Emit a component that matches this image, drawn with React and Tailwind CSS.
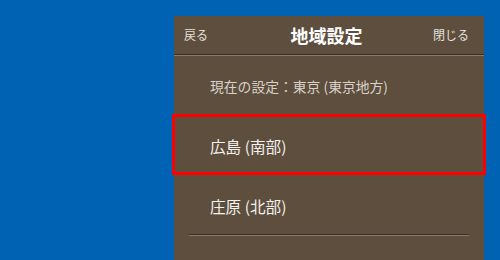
import React from "react";

const font = { fontFamily: '"Noto Sans CJK JP", "Noto Sans", sans-serif' };

const App = () => {
  return (
    <div
      className="w-[500px] h-[260px] bg-[#0062b2] overflow-hidden pl-[174px] pt-[16px]"
      style={font}
    >
      <div className="w-[310px] h-[260px] bg-[#5e4e3d]">
        {/* Header */}
        <div className="h-[38px] grid grid-cols-[1fr_auto_1fr] items-center pl-[10px] pr-[15px]">
          <span className="text-[12px] text-[#e4e0dc] justify-self-start">戻る</span>
          <span className="text-[18px] font-bold text-white">地域設定</span>
          <span className="text-[12px] text-[#e4e0dc] justify-self-end">閉じる</span>
        </div>
        <div className="h-px bg-[#3a2f25]" />
        <div className="h-px bg-[#8a7a68]" />

        {/* Current setting */}
        <div className="h-[58px] flex items-center pl-[36px] pt-[3px]">
          <span className="text-[13.8px] text-[#d9d2ca]">現在の設定：東京 (東京地方)</span>
        </div>

        {/* Items */}
        <div className="-mx-[2px] h-[61px] border-[3px] border-[#ff0000] flex items-center pl-[35px] pt-[4px]">
          <span className="text-[15.6px] text-[#f4f2ee]">広島 (南部)</span>
        </div>
        <div className="h-[59px] flex items-center pl-[36px] pt-[4px]">
          <span className="text-[15.6px] text-[#f4f2ee]">庄原 (北部)</span>
        </div>
        <div className="mx-[15px]">
          <div className="h-px bg-[#3a2f25]" />
          <div className="h-px bg-[#8a7a68]" />
        </div>
      </div>
    </div>
  );
};

export default App;
